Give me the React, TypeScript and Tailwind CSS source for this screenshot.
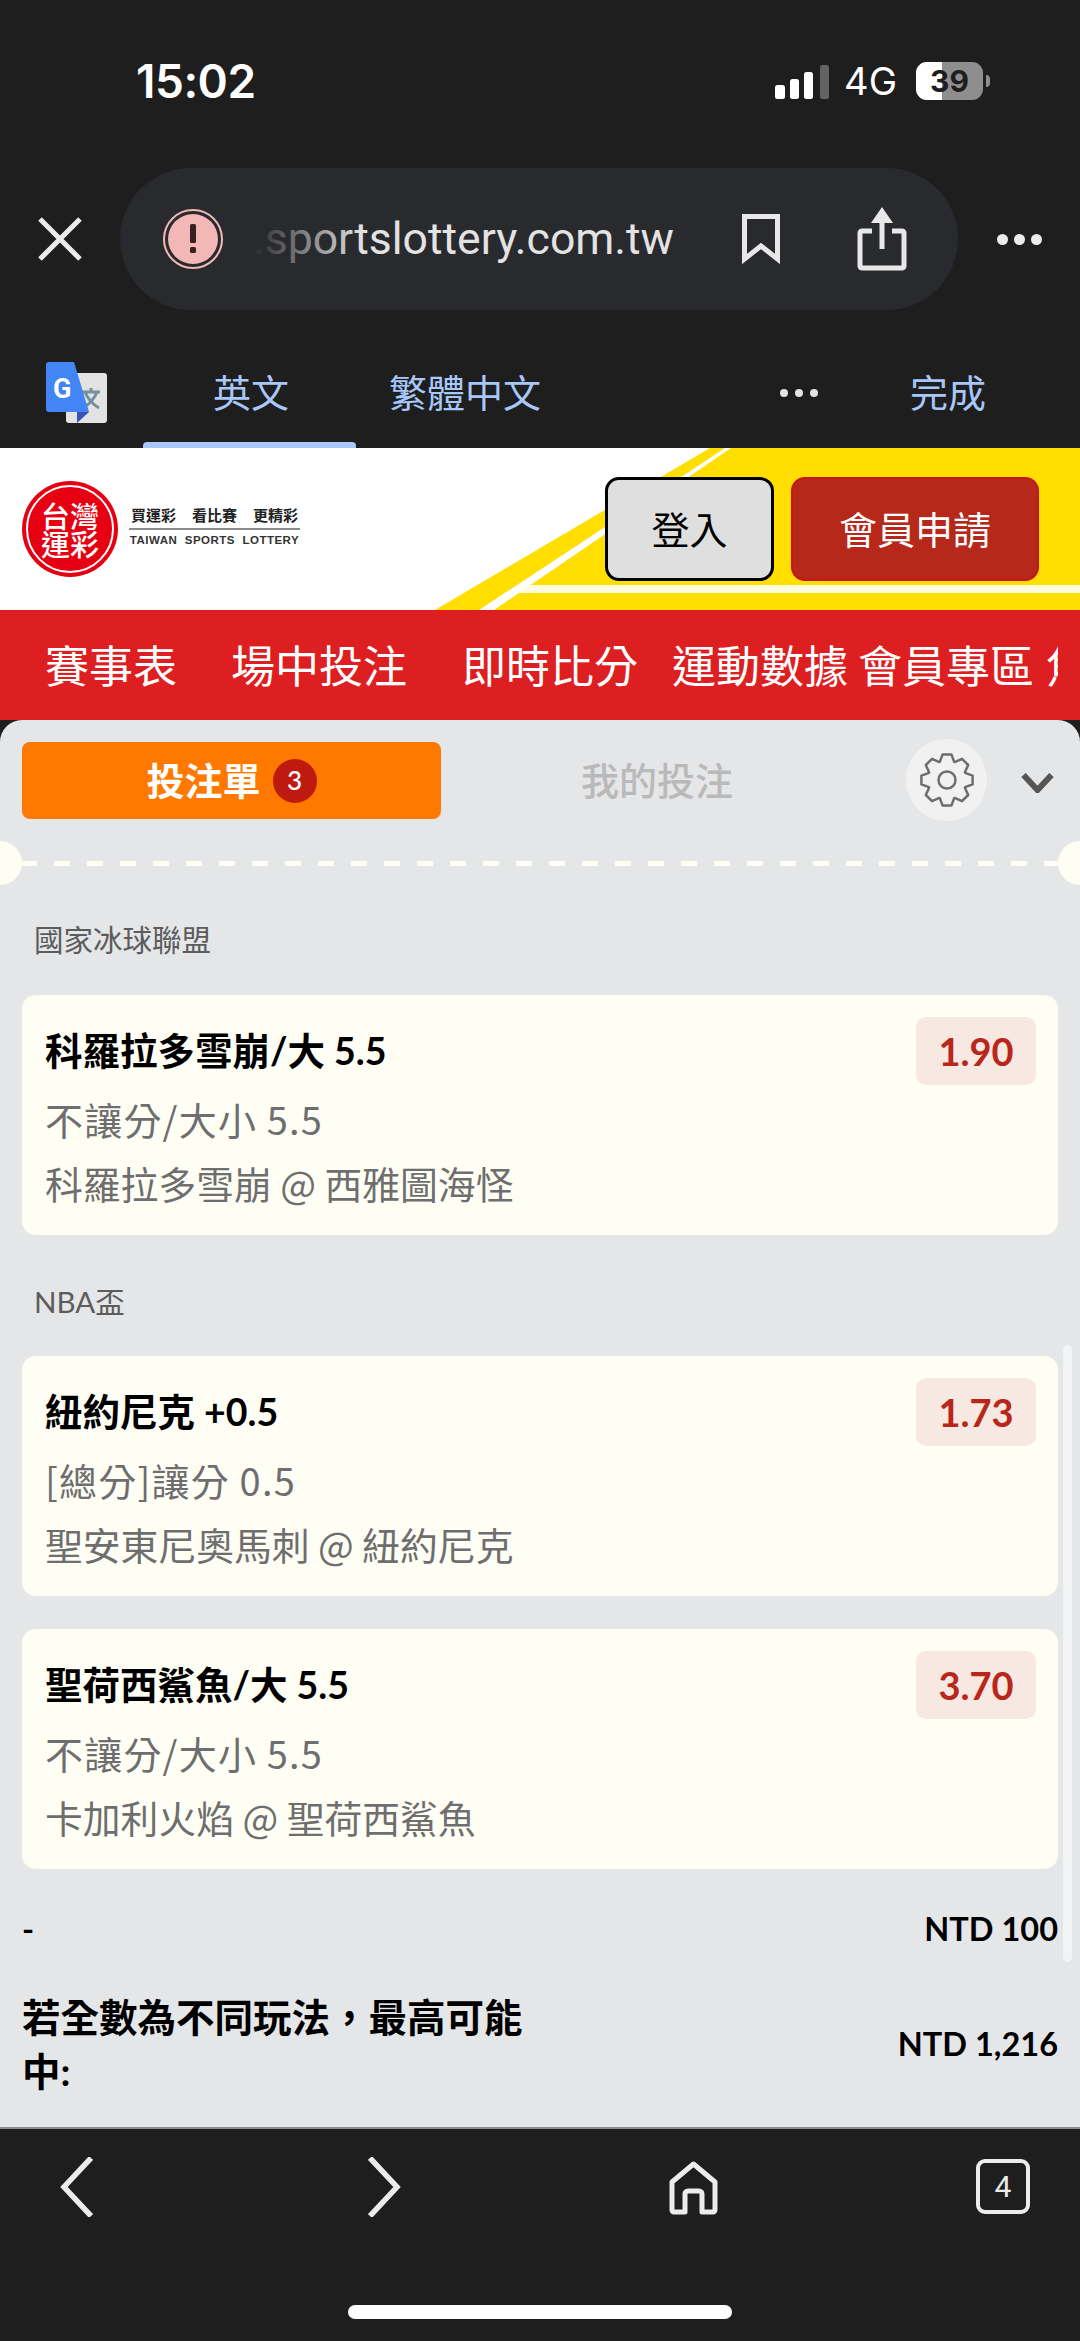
const SANS = "font-['Lato','Noto_Sans_CJK_TC',sans-serif]";
const CJK = "font-['Noto_Sans_CJK_TC',sans-serif]";

// cog outline with 8 teeth, centred on 28,28
function cogPath() {
  const pts: string[] = [];
  for (let i = 0; i < 8; i++) {
    const a = (i * Math.PI) / 4;
    const step = Math.PI / 24;
    const list: [number, number][] = [
      [19.5, a - 2.9 * step],
      [26, a - 1.3 * step],
      [26, a + 1.3 * step],
      [19.5, a + 2.9 * step],
    ];
    list.forEach(([r, t]) => {
      pts.push(`${(28 + r * Math.sin(t)).toFixed(1)} ${(28 - r * Math.cos(t)).toFixed(1)}`);
    });
  }
  return `M${pts.join(" L")} Z`;
}

function StatusBar() {
  return (
    <div className="h-[148px] pt-[56px] pl-[136px] pr-[90px] flex items-start justify-between text-white">
      <span className="text-[46px] leading-[50px] font-semibold font-['Inter',sans-serif] tracking-[-0.5px]">15:02</span>
      <div className="flex items-center gap-[19px] h-[50px]">
        <svg width="54" height="34" viewBox="0 0 54 34" className="mt-[2px] -mr-[4px]">
          <rect x="0" y="20" width="10" height="14" rx="2.5" fill="#fff" />
          <rect x="15" y="14" width="9" height="20" rx="2.5" fill="#fff" />
          <rect x="29" y="7" width="9" height="27" rx="2.5" fill="#fff" />
          <rect x="45" y="0" width="9" height="34" rx="2.5" fill="#636366" />
        </svg>
        <span className="text-[38px] leading-[50px] font-['Inter',sans-serif]">4G</span>
        <div className="flex items-center gap-[3px]">
          <div className="relative w-[67px] h-[38px] rounded-[11px] bg-[#8e8e8e] overflow-hidden flex items-center justify-center">
            <div className="absolute left-0 top-0 bottom-0 w-[26px] bg-white" />
            <span className="relative text-[30px] leading-none font-bold text-[#1e1e1e] font-['Inter',sans-serif]">39</span>
          </div>
          <div className="w-[4px] h-[12px] rounded-r-full bg-[#8e8e8e]" />
        </div>
      </div>
    </div>
  );
}

function AddressBar() {
  return (
    <div className="h-[166px] pt-[20px] flex items-start">
      <div className="w-[120px] h-[142px] flex items-center justify-center">
        <svg width="44" height="44" viewBox="0 0 44 44" fill="none" stroke="#ececec" strokeWidth="5">
          <path d="M2 2 L42 42 M42 2 L2 42" />
        </svg>
      </div>
      <div className="w-[838px] h-[142px] rounded-[71px] bg-[#292a2d] flex items-center pl-[43px]">
        <div className="w-[60px] h-[60px] rounded-full border-[2px] border-[#f2b8b5] p-[3px] shrink-0">
          <div className="w-full h-full rounded-full bg-[#f2b8b5] flex items-center justify-center">
            <svg width="8" height="30" viewBox="0 0 8 30">
              <rect x="1" y="0" width="6" height="19" rx="1.5" fill="#3a2020" />
              <rect x="1" y="23" width="6" height="6" rx="1.5" fill="#3a2020" />
            </svg>
          </div>
        </div>
        <div className="w-[430px] ml-[30px] overflow-hidden relative shrink-0">
          <span className="block text-[44.5px] leading-[60px] text-[#e3e3e3] font-['Roboto',sans-serif] whitespace-nowrap">.sportslottery.com.tw</span>
          <div className="absolute left-0 top-0 bottom-0 w-[110px] bg-gradient-to-r from-[#292a2d] to-[#292a2d]/0" />
        </div>
        <svg width="38" height="50" viewBox="0 0 38 50" fill="none" stroke="#e8e8e8" strokeWidth="5" className="ml-[59px] shrink-0">
          <path d="M2.5 2.5 H35.5 V45 L19 32 L2.5 45 Z" />
        </svg>
        <svg width="50" height="64" viewBox="0 0 50 64" fill="none" stroke="#e8e8e8" strokeWidth="5" className="ml-[77px] shrink-0">
          <path d="M15 24 H5 a2 2 0 0 0 -2 2 V59 a2 2 0 0 0 2 2 H45 a2 2 0 0 0 2 -2 V26 a2 2 0 0 0 -2 -2 H35" />
          <path d="M25 42 V8" />
          <path d="M25 0 L36 16 H14 Z" fill="#e8e8e8" stroke="none" />
        </svg>
      </div>
      <div className="w-[122px] h-[142px] flex items-center justify-center gap-[6px]">
        <i className="block w-[11px] h-[11px] rounded-full bg-[#ececec]" />
        <i className="block w-[11px] h-[11px] rounded-full bg-[#ececec]" />
        <i className="block w-[11px] h-[11px] rounded-full bg-[#ececec]" />
      </div>
    </div>
  );
}

function TranslateBar() {
  return (
    <div className={`h-[134px] relative flex items-start pl-[46px] text-[#a8c7fa] ${CJK} text-[38px] leading-[56px]`}>
      <svg width="62" height="62" viewBox="0 0 62 62" className="mt-[48px] shrink-0">
        <rect x="20" y="11" width="41" height="50" rx="3" fill="#e3e3e3" />
        <path d="M36 30 H54 M45 26 V30 M39 30 Q43 40 53 46 M51 30 Q47 40 37 46" stroke="#78909c" strokeWidth="3" fill="none" />
        <path d="M31 50 H43 L31 61 Z" fill="#3f51b5" />
        <path d="M3 0 H28 L43 50 H3 a3 3 0 0 1 -3 -3 V3 a3 3 0 0 1 3 -3 Z" fill="#4285f4" />
        <text x="7" y="36" fontSize="27" fontWeight="700" fill="#fff" fontFamily="Roboto, sans-serif">G</text>
      </svg>
      <div className="absolute left-[143px] bottom-0 w-[213px] h-[6px] rounded-t-[4px] bg-[#a8c7fa]" />
      <span className="ml-[105px] mt-[49px]">英文</span>
      <span className="ml-[100px] mt-[49px]">繁體中文</span>
      <div className="ml-[239px] mt-[75px] flex gap-[7px]">
        <i className="block w-[8px] h-[8px] rounded-full bg-[#e3e3e3]" />
        <i className="block w-[8px] h-[8px] rounded-full bg-[#e3e3e3]" />
        <i className="block w-[8px] h-[8px] rounded-full bg-[#e3e3e3]" />
      </div>
      <span className="ml-[92px] mt-[49px]">完成</span>
    </div>
  );
}

function Logo() {
  return (
    <div className="flex items-center">
      <div className="w-[96px] h-[96px] rounded-full bg-[#e60012] p-[4px] shrink-0">
        <div className={`w-full h-full rounded-full border-[2px] border-white flex flex-col items-center justify-center text-white ${CJK} font-medium text-[29px] leading-[28px]`}>
          <span>台灣</span>
          <span>運彩</span>
        </div>
      </div>
      <div className={`ml-[11px] w-[171px] pb-[5px] flex flex-col items-stretch text-center ${CJK}`}>
        <span className="text-[#222] text-[15px] leading-[18px] font-bold whitespace-nowrap flex justify-between px-[2px]">
          <span>買運彩</span><span>看比賽</span><span>更精彩</span>
        </span>
        <div className="h-[2px] bg-[#8a8a8a] mt-[4px]" />
        <span className="text-[#333] text-[11.5px] leading-[14px] mt-[3px] font-bold tracking-[0.5px] font-['Liberation_Sans',sans-serif] whitespace-nowrap">TAIWAN&nbsp; SPORTS&nbsp; LOTTERY</span>
      </div>
    </div>
  );
}

function SiteHeader() {
  return (
    <div className="relative h-[162px] bg-white overflow-hidden pl-[22px] pr-[41px] flex items-center justify-between">
      <svg className="absolute inset-0 w-full h-full" viewBox="0 0 1080 162">
        <path d="M435 162 L710 0 H1080 V162 Z" fill="#ffde00" />
        <path d="M725 0 H731 L494 162 H479 Z" fill="#fff" />
        <path d="M529 137 H1080 V145 H516 Z" fill="#fffbe0" />
      </svg>
      <div className="relative"><Logo /></div>
      <div className={`relative flex gap-[17px] ${CJK} text-[38px]`}>
        <div className="w-[169px] h-[104px] pb-[4px] rounded-[14px] border-[3px] border-black bg-[#dfdfdf] text-black flex items-center justify-center">登入</div>
        <div className="w-[248px] h-[104px] pb-[4px] rounded-[14px] border-[2px] border-[#c8141a] bg-[#b5281a] text-white flex items-center justify-center">會員申請</div>
      </div>
    </div>
  );
}

function SiteNav() {
  return (
    <div className={`relative h-[110px] pb-[2px] bg-[#dd1f21] overflow-hidden flex items-center whitespace-nowrap text-white text-[44px] leading-[56px] ${CJK} pl-[45px]`}>
      <span>賽事表</span>
      <span className="ml-[54px]">場中投注</span>
      <span className="ml-[55px]">即時比分</span>
      <span className="ml-[34px]">運動數據</span>
      <span className="ml-[10px]">會員專區</span>
      <span className="ml-[12px]">焦</span>
      <div className="absolute right-0 top-0 bottom-0 w-[22px] bg-[#dd1f21]" />
    </div>
  );
}

function SlipTabs() {
  return (
    <div className="h-[121px] pl-[22px] pt-[22px] flex items-start">
      <div className={`w-[419px] h-[77px] rounded-[8px] bg-[#ff7900] flex items-center justify-center gap-[12px] text-white font-bold text-[38px] ${CJK}`}>
        <span className="pb-[4px]">投注單</span>
        <span className="w-[44px] h-[44px] rounded-full bg-[#bf1a10] text-[26px] font-medium flex items-center justify-center font-['Lato',sans-serif]">3</span>
      </div>
      <div className={`w-[432px] h-[77px] pb-[4px] flex items-center justify-center text-[#b9b9b9] text-[38px] font-medium ${CJK}`}>我的投注</div>
      <div className="ml-[33px] w-[81px] h-[82px] -mt-[3px] rounded-full bg-[#f1f1f2] flex items-center justify-center shrink-0">
        <svg width="56" height="56" viewBox="0 0 56 56" fill="none" stroke="#6e6e6e" strokeWidth="2.5" strokeLinejoin="round">
          <path d={cogPath()} />
          <circle cx="28" cy="28" r="8.5" />
        </svg>
      </div>
      <svg width="33" height="20" viewBox="0 0 33 20" fill="none" stroke="#555" strokeWidth="6" className="ml-[34px] mt-[31px] shrink-0">
        <path d="M2.5 2 L16.5 17 L30.5 2" />
      </svg>
    </div>
  );
}

function Ticket() {
  return (
    <div className="relative h-[44px] overflow-hidden">
      <div className="absolute left-[21px] right-0 top-[20px] h-[5px] bg-[repeating-linear-gradient(90deg,#fffef5_0,#fffef5_16px,transparent_16px,transparent_33px)]" />
      <div className="absolute -left-[22px] top-0 w-[44px] h-[44px] rounded-full bg-[#fffef5]" />
      <div className="absolute -right-[22px] top-0 w-[44px] h-[44px] rounded-full bg-[#fffef5]" />
    </div>
  );
}

interface Bet {
  title: string;
  market: string;
  match: string;
  odds: string;
}

function BetCard({ bet }: { bet: Bet }) {
  return (
    <div className="h-[240px] rounded-[14px] bg-[#fffef5] pl-[23px] pr-[22px] pt-[21px]">
      <div className="flex justify-between items-start">
        <p className={`text-[37.5px] leading-[70px] font-bold text-black ${SANS}`}>{bet.title}</p>
        <span className={`w-[120px] h-[68px] mt-[1px] rounded-[10px] bg-[#f7e8e1] flex items-center justify-center text-[38px] font-bold text-[#b8261c] ${SANS}`}>{bet.odds}</span>
      </div>
      <p className={`text-[38px] leading-[64px] tracking-[1.2px] text-[#6e6e6e] mt-[1px] ${CJK}`}>{bet.market}</p>
      <p className={`text-[37.8px] leading-[64px] text-[#6e6e6e] ${CJK}`}>{bet.match}</p>
    </div>
  );
}

function BetSlip() {
  return (
    <div className="relative h-[1407px] shrink-0 bg-[#e5e6e8] rounded-t-[22px] overflow-hidden">
      <SlipTabs />
      <Ticket />
      <p className={`ml-[34px] mt-[35px] text-[29.5px] leading-[40px] text-[#5c5c5c] ${SANS}`}>國家冰球聯盟</p>
      <div className="mx-[22px] mt-[35px]">
        <BetCard bet={{ title: "科羅拉多雪崩/大 5.5", market: "不讓分/大小 5.5", match: "科羅拉多雪崩 @ 西雅圖海怪", odds: "1.90" }} />
      </div>
      <p className={`ml-[34px] mt-[47px] text-[29.5px] leading-[40px] text-[#5c5c5c] ${SANS}`}>NBA盃</p>
      <div className="mx-[22px] mt-[34px] flex flex-col gap-[33px]">
        <BetCard bet={{ title: "紐約尼克 +0.5", market: "[總分]讓分 0.5", match: "聖安東尼奧馬刺 @ 紐約尼克", odds: "1.73" }} />
        <BetCard bet={{ title: "聖荷西鯊魚/大 5.5", market: "不讓分/大小 5.5", match: "卡加利火焰 @ 聖荷西鯊魚", odds: "3.70" }} />
      </div>
      <div className={`mx-[22px] mt-[35px] flex justify-between items-center text-[32.5px] leading-[50px] font-bold text-black ${SANS}`}>
        <span>-</span>
        <span>NTD 100</span>
      </div>
      <div className={`mx-[22px] mt-[36px] flex justify-between items-center text-[38.5px] leading-[54px] font-bold text-black ${SANS}`}>
        <span className="w-[515px]">若全數為不同玩法，最高可能中:</span>
        <span className="text-[32.5px]">NTD 1,216</span>
      </div>
      <div className="absolute left-[1063px] top-[625px] w-[9px] h-[617px] rounded-full bg-[#f2f3f4]" />
    </div>
  );
}

function BottomBar() {
  return (
    <div className="h-[214px] bg-[#1e1e1e] border-t-[2px] border-[#8a8a8a] pt-[28px] relative">
      <div className="flex items-start h-[64px]">
        <svg width="33" height="60" viewBox="0 0 33 60" fill="none" stroke="#ececec" strokeWidth="5.5" className="ml-[60px]">
          <path d="M31 1 L4 30 L31 59" />
        </svg>
        <svg width="33" height="60" viewBox="0 0 33 60" fill="none" stroke="#ececec" strokeWidth="5.5" className="ml-[275px]">
          <path d="M2 1 L29 30 L2 59" />
        </svg>
        <svg width="49" height="54" viewBox="0 0 49 54" fill="none" stroke="#ececec" strokeWidth="5" strokeLinejoin="round" className="ml-[268px] mt-[4px]">
          <path d="M24.5 3 L46 21 V49 a2 2 0 0 1 -2 2 H33 V33 a3 3 0 0 0 -3 -3 H19 a3 3 0 0 0 -3 3 V51 H5 a2 2 0 0 1 -2 -2 V21 Z" />
        </svg>
        <div className="ml-[258px] mt-[2px] w-[54px] h-[55px] rounded-[9px] border-[4px] border-[#ececec] text-[#ececec] text-[30px] font-['Roboto',sans-serif] flex items-center justify-center">4</div>
      </div>
      <div className="absolute left-[348px] bottom-[22px] w-[384px] h-[14px] rounded-full bg-white" />
    </div>
  );
}

export default function App() {
  return (
    <div className="w-[1080px] h-[2341px] overflow-hidden bg-[#1e1e1e] flex flex-col">
      <StatusBar />
      <AddressBar />
      <TranslateBar />
      <SiteHeader />
      <SiteNav />
      <BetSlip />
      <BottomBar />
    </div>
  );
}
